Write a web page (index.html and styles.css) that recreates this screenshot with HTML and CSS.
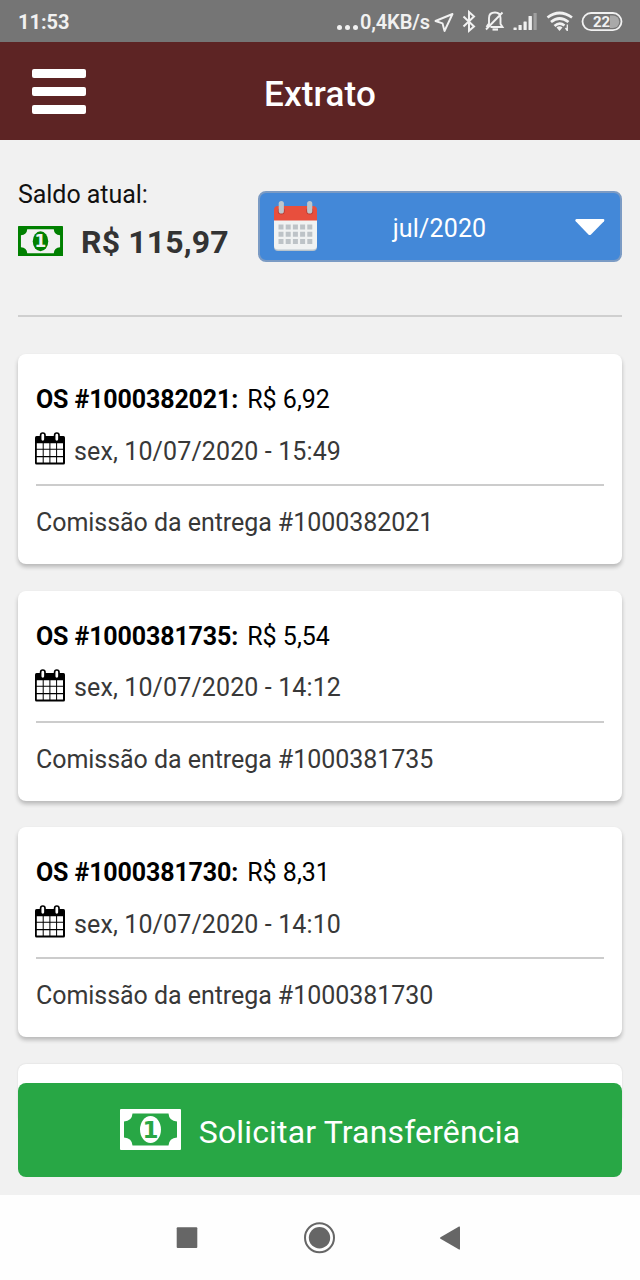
FILE: index.html
```html
<!DOCTYPE html>
<html lang="pt-BR">
<head>
<meta charset="utf-8">
<title>Extrato</title>
<link rel="stylesheet" href="styles.css">
</head>
<body>
<svg class="defs" aria-hidden="true">
  <symbol id="calendar" viewBox="0 0 30 33">
    <path d="M1.500 4H28.500Q30 4 30 5.500V31Q30 32.500 28.500 32.500H1.500Q0 32.500 0 31V5.500Q0 4 1.500 4Z"/>
    <path fill="#fff" d="M1.800 11.200h5.900v5.600H1.800zM8.700 11.200h5.700v5.600H8.700zM15.400 11.200h5.700v5.600h-5.700zM22.100 11.200h5.900v5.600h-5.900zM1.800 17.800h5.900v6.300H1.800zM8.700 17.800h5.700v6.300H8.700zM15.400 17.800h5.700v6.300h-5.700zM22.100 17.800h5.900v6.300h-5.900zM1.800 25.200h5.900v5.400H1.800zM8.700 25.200h5.700v5.400H8.700zM15.400 25.200h5.700v5.400h-5.700zM22.100 25.200h5.900v5.400h-5.900z"/>
    <rect x="5.600" y="1" width="4.400" height="8.500" rx="2.200" fill="#fff" stroke="#000" stroke-width="1.700"/>
    <rect x="19.600" y="1" width="4.400" height="8.500" rx="2.200" fill="#fff" stroke="#000" stroke-width="1.700"/>
  </symbol>
  <symbol id="cash" viewBox="0 0 61 41">
    <path fill="currentColor" fill-rule="evenodd" d="M1 0H60Q61 0 61 1V40Q61 41 60 41H1Q0 41 0 40V1Q0 0 1 0ZM12.500 4.500Q12 12 4 12.500V28.500Q12 29 12.500 36.500H48.500Q49 29 57 28.500V12.500Q49 12 48.500 4.500Z"/>
    <ellipse cx="30.500" cy="20.500" rx="10.500" ry="13.500" fill="currentColor"/>
  </symbol>
</svg>

<div class="screen">
  <div class="status">
    <span class="clock">11:53</span>
    <span class="dots"><i></i><i></i><i></i></span>
    <span class="speed">0,4KB/s</span>
    <svg class="status-icons" width="192" height="42" viewBox="432 0 192 42" fill="none" stroke="#f1f1f1">
      <path d="M435.500 21L452.500 14L444.500 31L442.500 23.300Z" stroke-width="1.900" stroke-linejoin="round"/>
      <path d="M463.500 16.500L474 26.500L469 30.800V12L474 16.500L463.500 26.500" stroke-width="2"/>
      <path d="M489 24.500V18Q489 12.500 495 12.500Q500.500 12.500 500.500 18V24L502.500 27H490.500M488.500 24L486.500 27M486 29.500L502.500 12.500" stroke-width="1.900"/>
      <path d="M492.500 29.500H498" stroke-width="2.200"/>
      <g fill="#f1f1f1" stroke="none">
        <rect x="513.500" y="27.500" width="3.200" height="2.500" rx=".5"/><rect x="518.500" y="25" width="3.200" height="5" rx=".5"/><rect x="523.500" y="21.500" width="3.200" height="8.500" rx=".5"/><rect x="528.500" y="16" width="3.400" height="14" rx=".5"/><rect x="533.500" y="13" width="3.200" height="17" rx=".5" opacity=".35"/>
      </g>
      <path d="M547.500 17.500Q559.500 8.500 572 17.500M551 22Q559.500 15 568.500 22M554.500 26Q559.500 21.500 564.500 25.500" stroke-width="2.700"/>
      <path d="M556.500 27.500Q559.500 24.800 562.500 27.500L559.500 31Z" fill="#f1f1f1" stroke="none"/>
      <path d="M567.300 24.500V31M565.500 28L567.300 30.500" stroke-width="1.300"/>
      <path d="M610 15.500H613A6 6 0 0 1 613 28H610Z" fill="#a9a9a9" stroke="none"/>
      <rect x="582.500" y="13" width="39" height="17.200" rx="8.600" stroke-width="1.800"/>
      <text class="battery" x="601.500" y="27" text-anchor="middle">22</text>
    </svg>
  </div>

  <header class="header">
    <div class="menu"><i></i><i></i><i></i></div>
    <h1 class="title">Extrato</h1>
  </header>

  <main class="content">
    <section class="summary">
      <div class="balance">
        <div class="balance-label">Saldo atual:</div>
        <div class="balance-row">
          <svg class="balance-icon" viewBox="0 0 61 41" preserveAspectRatio="none"><use href="#cash"/><text class="cash-digit" x="30.500" y="28.800" text-anchor="middle">1</text></svg>
          <span class="balance-value">R$ 115,97</span>
        </div>
      </div>
      <div class="month">
        <svg width="44" height="52" viewBox="0 0 44 52">
          <path d="M0 19H43V46Q43 50 39 50H4Q0 50 0 46Z" fill="#b9c4cc"/>
          <path d="M0 19H43V44.500Q43 48.500 39 48.500H4Q0 48.500 0 44.500Z" fill="#f0f2f2"/>
          <path d="M0 19.500V9Q0 5 4 5H39Q43 5 43 9V19.500Z" fill="#e84f3d"/>
          <circle cx="7.300" cy="10" r="3.500" fill="#b93c35"/><circle cx="35.700" cy="10" r="3.500" fill="#b93c35"/>
          <rect x="4.700" y="0" width="5.200" height="12.500" rx="2.600" fill="#bdc6cc"/><rect x="33.100" y="0" width="5.200" height="12.500" rx="2.600" fill="#bdc6cc"/>
          <path fill="#bdc3c7" d="M4.500 23.500h5v5h-5zM11.700 23.500h5v5h-5zM18.900 23.500h5v5h-5zM26.100 23.500h5v5h-5zM33.300 23.500h5v5h-5zM4.500 30.700h5v5h-5zM11.700 30.700h5v5h-5zM18.900 30.700h5v5h-5zM26.100 30.700h5v5h-5zM33.300 30.700h5v5h-5zM4.500 37.900h5v5h-5zM11.700 37.900h5v5h-5zM18.900 37.900h5v5h-5zM26.100 37.900h5v5h-5zM33.300 37.900h5v5h-5z"/>
        </svg>
        <span class="month-label">jul/2020</span>
        <svg width="30" height="18" viewBox="0 0 30 18"><path d="M1.500 1H28.500Q30 1.500 29 3.300L16 16.500Q14.700 17.500 13.400 16.500L.7 3.300Q-.5 1.500 1.500 1Z" fill="#fff"/></svg>
      </div>
    </section>

    <section class="list">
      <article class="card">
        <div class="order"><b class="order-id">OS #1000382021:</b><span class="amount">R$ 6,92</span></div>
        <div class="date"><svg width="30" height="33"><use href="#calendar"/></svg><span class="date-text">sex, 10/07/2020 - 15:49</span></div>
        <div class="note"><span class="note-text">Comissão da entrega #1000382021</span></div>
      </article>
      <article class="card">
        <div class="order"><b class="order-id">OS #1000381735:</b><span class="amount">R$ 5,54</span></div>
        <div class="date"><svg width="30" height="33"><use href="#calendar"/></svg><span class="date-text">sex, 10/07/2020 - 14:12</span></div>
        <div class="note"><span class="note-text">Comissão da entrega #1000381735</span></div>
      </article>
      <article class="card">
        <div class="order"><b class="order-id">OS #1000381730:</b><span class="amount">R$ 8,31</span></div>
        <div class="date"><svg width="30" height="33"><use href="#calendar"/></svg><span class="date-text">sex, 10/07/2020 - 14:10</span></div>
        <div class="note"><span class="note-text">Comissão da entrega #1000381730</span></div>
      </article>
      <article class="card card-partial"></article>
    </section>

    <div class="transfer">
      <svg class="transfer-icon" width="61" height="41"><use href="#cash"/><text class="cash-digit" x="30.500" y="28.800" text-anchor="middle">1</text></svg>
      <span class="transfer-label">Solicitar Transferência</span>
    </div>
  </main>

  <nav class="navbar">
    <svg width="640" height="85" viewBox="0 1195 640 85" fill="#666">
      <rect x="176.700" y="1227.300" width="20.600" height="20.600" rx="1"/>
      <circle cx="319.500" cy="1237.700" r="14.500" fill="none" stroke="#666" stroke-width="2"/>
      <circle cx="319.500" cy="1237.700" r="10.700"/>
      <path d="M459 1226.500Q460 1226 460 1227.500V1248.500Q460 1250 459 1249.500L440.500 1238.800Q439.300 1238 440.500 1237.200Z"/>
    </svg>
  </nav>
</div>
</body>
</html>
```
FILE: styles.css
```css
* { box-sizing: border-box; }
body { margin: 0; font-family: Roboto, "Liberation Sans", sans-serif; background: #f1f1f1; }
.defs { position: absolute; width: 0; height: 0; }
.screen { width: 640px; height: 1280px; display: flex; flex-direction: column; overflow: hidden; }

.status { height: 42px; flex: none; display: flex; align-items: center; background: #757575; color: #f1f1f1; padding: 0 16px 0 18px; }
.clock { font-size: 20px; font-weight: 700; line-height: 40px; margin-right: auto; padding-top: 2px; }
.dots { display: flex; gap: 3px; padding-top: 12px; margin-right: 2px; }
.dots i { width: 5px; height: 5px; border-radius: 50%; background: #f1f1f1; }
.speed { font-size: 20px; font-weight: 600; line-height: 40px; padding-top: 2px; margin-right: 2px; letter-spacing: -.1px; }
.status-icons { flex: none; }
.battery { font: 700 15px Roboto, sans-serif; fill: #f1f1f1; stroke: none; }

.header { height: 98px; flex: none; background: #5d2424; display: grid; grid-template-columns: 54px 1fr 54px; align-items: center; padding: 0 32px; }
.menu { display: grid; gap: 9px; padding-top: 1px; }
.menu i { height: 9px; border-radius: 2px; background: #fff; }
.title { margin: 0; padding-top: 7px; color: #fff; font-size: 35px; font-weight: 500; line-height: 42px; text-align: center; letter-spacing: .2px; }

.content { flex: 1; min-height: 0; position: relative; overflow: hidden; padding: 0 18px; }
.summary { height: 177px; border-bottom: 2px solid #cfcfcf; display: flex; justify-content: space-between; }
.balance { padding-top: 39px; }
.balance-label { font-size: 25px; line-height: 32px; color: #111; letter-spacing: -.05px; }
.balance-row { display: flex; align-items: center; gap: 18px; padding-top: 12px; }
.balance-icon { width: 45px; height: 30.500px; margin-top: -2px; color: #008000; --digit: #f1f1f1; }
.balance-value { font-size: 32px; line-height: 38px; font-weight: 700; color: #333; letter-spacing: .15px; }
.transfer-icon { margin-top: -1px; --digit: #28a745; }
.cash-digit { font: 700 23px "DejaVu Sans", sans-serif; fill: var(--digit); }
.month { width: 364px; height: 71px; margin-top: 51px; border: 2px solid #7b9bc4; border-radius: 8px; background: #4388d8; display: flex; align-items: center; justify-content: space-between; padding: 0 15px 0 14px; }
.month-label { color: #fff; font-size: 25px; line-height: 30px; padding: 5px 14px 0 0; letter-spacing: .15px; }

.list { padding-top: 37px; display: grid; gap: 26.500px; }
.card { height: 210px; border-radius: 8px; background: #fff; box-shadow: 0 3px 4px rgba(0,0,0,.24); padding: 31px 18px 0; }
.card-partial { height: 60px; padding: 0; box-shadow: 0 0 2px rgba(0,0,0,.12); }
.order { display: flex; gap: 9px; line-height: 30px; font-size: 25px; color: #000; white-space: nowrap; }
.order-id { letter-spacing: -.13px; }
.date { display: flex; align-items: center; gap: 9px; height: 33px; margin: 17px 0 0 -1px; font-size: 25px; color: #383838; }
.date-text { padding-top: 5px; letter-spacing: .12px; }
.note { border-top: 2px solid #ccc; margin-top: 19px; padding-top: 21px; font-size: 25px; line-height: 32px; color: #383838; letter-spacing: -.05px; }

.transfer { position: absolute; left: 18px; right: 18px; bottom: 18px; height: 94px; border-radius: 8px; background: #28a745; display: flex; align-items: center; justify-content: center; gap: 18px; color: #fff; font-size: 32px; }
.transfer-label { line-height: 38px; padding-top: 4px; letter-spacing: .15px; }

.navbar { height: 85px; flex: none; background: #fefefe; }
.navbar svg { display: block; }
```
